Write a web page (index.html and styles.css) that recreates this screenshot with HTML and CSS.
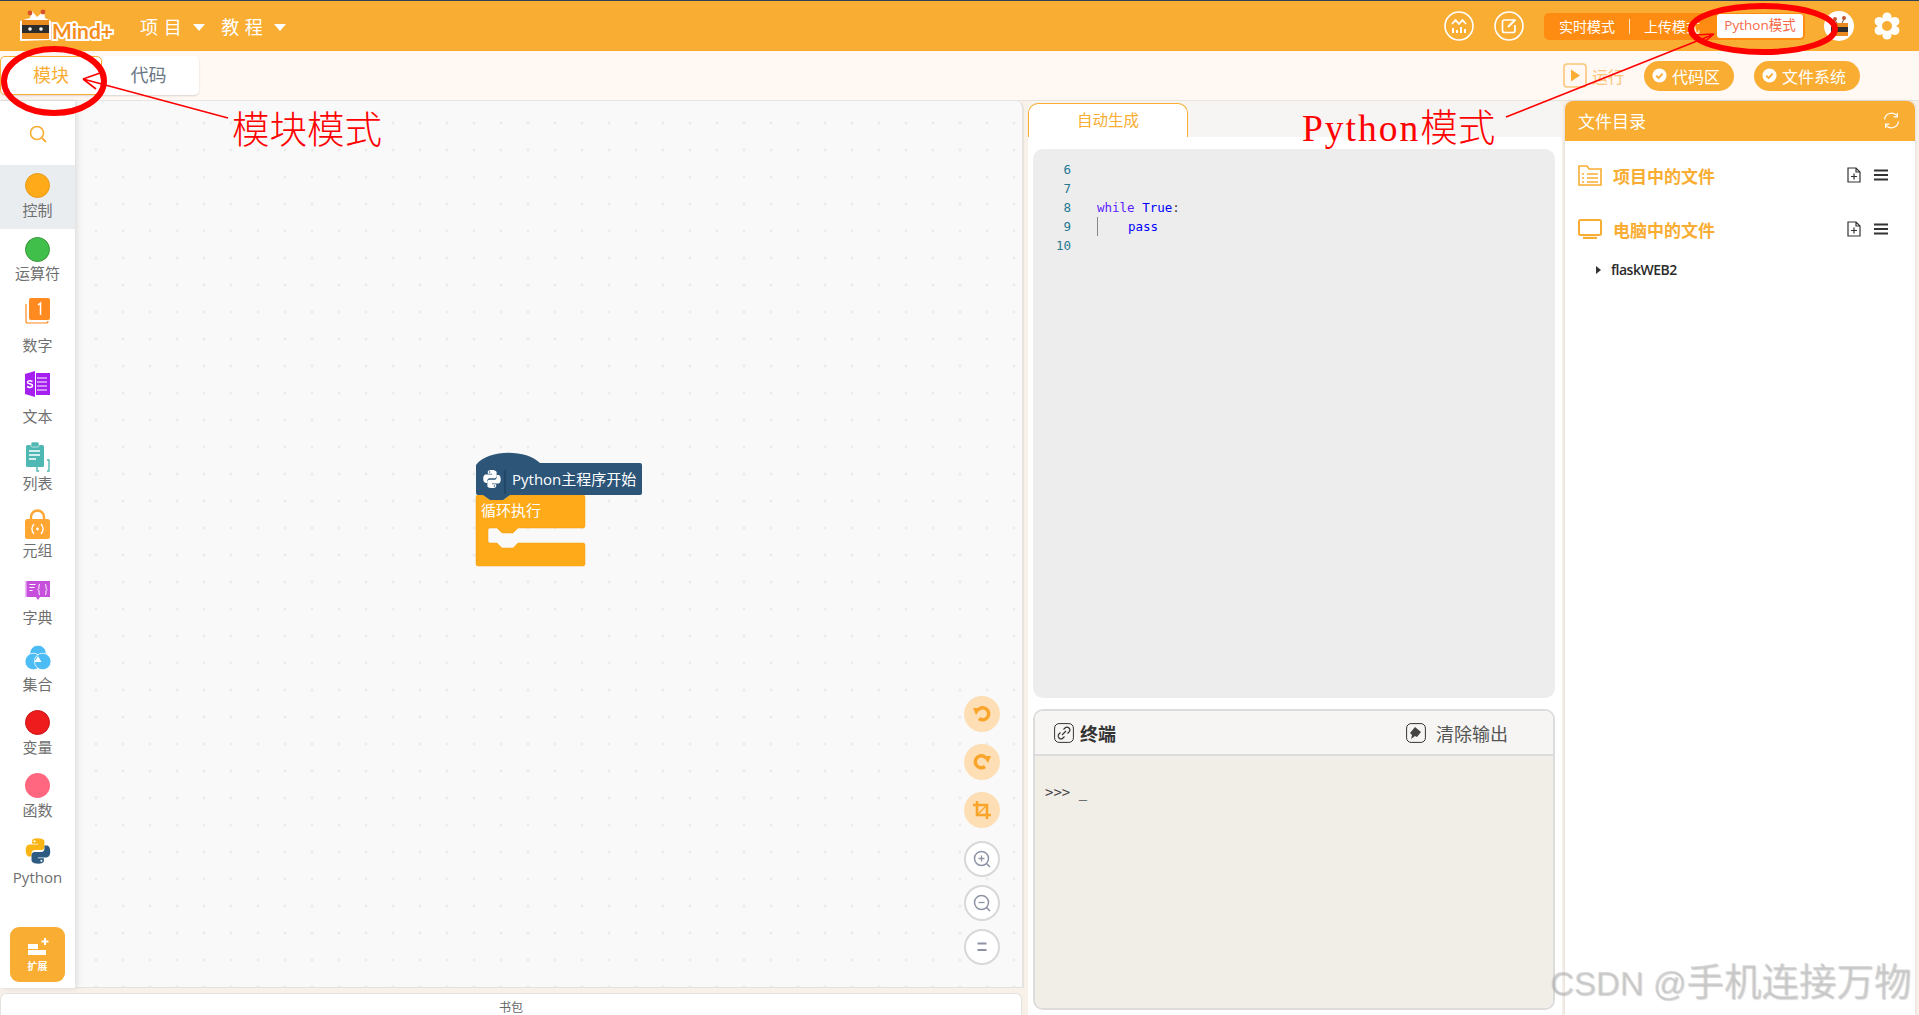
FILE: index.html
```html
<!DOCTYPE html>
<html lang="zh-CN">
  <head>
    <meta charset="UTF-8" />
    <meta name="viewport" content="width=device-width, initial-scale=1.0" />
    <title>Mind+</title>
    <link rel="stylesheet" href="styles.css">
  </head>
  <body>
    <svg class="sprite" width="0" height="0">
      <symbol id="py-half" viewBox="0 0 32 32">
        <path fill-rule="evenodd" d="M15.9 1.5c-7 0-6.6 3-6.6 3v3.2h6.8v1H6.7S2 8.1 2 15.3s4.1 7 4.1 7h2.5v-3.4s-.1-4.1 4-4.1h6.9s3.9.1 3.9-3.8V5.4s.6-3.9-8.5-3.9zM12.1 3.7a1.2 1.2 0 1 1 0 2.4 1.2 1.2 0 0 1 0-2.4z"/>
      </symbol>
      <symbol id="check" viewBox="0 0 16 16">
        <circle cx="8" cy="8" r="7.5" fill="#fff"/>
        <path d="M4.5 8.2l2.5 2.5 4.3-4.8" fill="none" stroke="#f9ad33" stroke-width="2"/>
      </symbol>
      <symbol id="new-file" viewBox="0 0 14 16">
        <path d="M1 1h8l4 4v10H1z M9 1v4h4" fill="none" stroke="#333" stroke-width="1.2"/>
        <path d="M7 6.5v6M4 9.5h6" stroke="#333" stroke-width="1.2"/>
      </symbol>
      <symbol id="menu-lines" viewBox="0 0 14 12">
        <path d="M0 1.5h14M0 6h14M0 10.5h14" stroke="#333" stroke-width="1.8"/>
      </symbol>
    </svg>

    <header class="topbar">
      <svg class="logo" width="102" height="34" viewBox="0 0 102 34">
        <path d="M4 13L14 10 16 3 21 9 28 3 29 10 35 13V32L4 33z" fill="#fff"/>
        <rect x="6" y="12" width="27" height="19" fill="#e98a1f"/>
        <rect x="6" y="17" width="27" height="8" fill="#2c2c2c"/>
        <circle cx="14" cy="21" r="1.800" fill="#fff"/>
        <circle cx="25" cy="21" r="1.800" fill="#fff"/>
        <circle cx="14" cy="5" r="2.400" fill="#d9522b"/>
        <circle cx="27" cy="4" r="2.400" fill="#d9522b"/>
        <text class="logo-text" x="36" y="31">Mind+</text>
      </svg>
      <nav class="menu">
        <span class="menu-item">项 目<i class="caret"></i></span>
        <span class="menu-item">教 程<i class="caret"></i></span>
      </nav>
      <div class="top-right">
        <svg class="round-icon" width="30" height="30" viewBox="0 0 30 30">
          <circle cx="15" cy="15" r="14" fill="none" stroke="#fff" stroke-width="1.6"/>
          <path d="M8 13l3.5-4 3.5 4 3.5-4 3.5 4" fill="none" stroke="#fff" stroke-width="1.8"/>
          <path d="M9 22v-5M13 22v-3M17 22v-6M21 22v-4" stroke="#fff" stroke-width="2"/>
        </svg>
        <svg class="round-icon" width="30" height="30" viewBox="0 0 30 30">
          <circle cx="15" cy="15" r="14" fill="none" stroke="#fff" stroke-width="1.6"/>
          <path d="M20 9H10.5a2 2 0 0 0-2 2v8.500a2 2 0 0 0 2 2H19a2 2 0 0 0 2-2V14" fill="none" stroke="#fff" stroke-width="1.7"/>
          <path d="M14 16l7.500-7.500" stroke="#fff" stroke-width="2"/>
        </svg>
        <div class="mode-switch">
          <span class="mode">实时模式</span>
          <i class="mode-sep"></i>
          <span class="mode">上传模式</span>
          <span class="mode mode-active">Python模式</span>
        </div>
        <div class="avatar">
          <svg width="24" height="24" viewBox="0 0 24 24">
            <rect x="4" y="9" width="17" height="13" fill="#e98a1f"/>
            <rect x="4" y="13" width="17" height="5" fill="#2c2c2c"/>
            <circle cx="8" cy="5" r="2" fill="#c9552f"/>
            <circle cx="17" cy="4" r="2" fill="#c9552f"/>
            <path d="M8 6l2 3M17 5l-2 4" stroke="#7a5a3a"/>
          </svg>
        </div>
        <svg class="gear" width="28" height="28" viewBox="0 0 28 28">
          <g fill="#fff">
            <circle cx="14" cy="5" r="4.600"/><circle cx="14" cy="23" r="4.600"/>
            <circle cx="6.200" cy="9.500" r="4.600"/><circle cx="21.800" cy="9.500" r="4.600"/>
            <circle cx="6.200" cy="18.500" r="4.600"/><circle cx="21.800" cy="18.500" r="4.600"/>
            <circle cx="14" cy="14" r="9"/>
          </g>
          <circle cx="14" cy="14" r="5" fill="#f9ad33"/>
        </svg>
      </div>
    </header>

    <div class="subbar">
      <div class="tabs">
        <span class="tab tab-active">模块</span>
        <span class="tab">代码</span>
      </div>
      <div class="actions">
        <span class="run">
          <svg width="24" height="25" viewBox="0 0 24 25">
            <rect x="1" y="1" width="22" height="23" rx="3" fill="none" stroke="#fbc67a" stroke-width="1.600"/>
            <path d="M8 6.500l9 6-9 6z" fill="#f9ad33"/>
          </svg>
          运行
        </span>
        <span class="pill pill-code"><svg width="15" height="15"><use href="#check"/></svg>代码区</span>
        <span class="pill pill-files"><svg width="15" height="15"><use href="#check"/></svg>文件系统</span>
      </div>
    </div>

    <main class="main">
      <div class="left-col">
        <div class="workspace">
          <aside class="sidebar">
            <div class="search">
              <svg width="20" height="20" viewBox="0 0 20 20">
                <circle cx="9" cy="9" r="6.500" fill="none" stroke="#f9ad33" stroke-width="1.600"/>
                <path d="M14 14l4 4" stroke="#f9ad33" stroke-width="1.800"/>
              </svg>
            </div>
            <div class="cat cat-control">
              <span class="cat-icon"><i class="dot dot-orange"></i></span>
              <span class="cat-label">控制</span>
            </div>
            <div class="cat cat-op">
              <span class="cat-icon"><i class="dot dot-green"></i></span>
              <span class="cat-label">运算符</span>
            </div>
            <div class="cat cat-num">
              <span class="cat-icon">
                <svg width="25" height="26" viewBox="0 0 25 26">
                  <path d="M1 6v17a2 2 0 0 0 2 2h18a2 2 0 0 0 2-2" fill="none" stroke="#ff8a1f" stroke-width="1.200"/>
                  <rect x="4" y="0" width="21" height="22" rx="2" fill="#ff8a1f"/>
                  <path d="M13 7l2.500-2V17" fill="none" stroke="#fff" stroke-width="1.500"/>
                </svg>
              </span>
              <span class="cat-label">数字</span>
            </div>
            <div class="cat cat-text">
              <span class="cat-icon">
                <svg width="25" height="26" viewBox="0 0 25 26">
                  <path d="M10 0L0 3v20l10 3z" fill="#a51ff0"/>
                  <rect x="11" y="2" width="14" height="22" fill="#a51ff0"/>
                  <path d="M12 7h10M12 11h10M12 15h10M12 19h10" stroke="#fff" stroke-width="1.200"/>
                  <path d="M7.500 10.500c-3-1.500-5-.5-5 1s5 1 5 3-3 2.500-5.500 1" fill="none" stroke="#fff" stroke-width="1.500"/>
                </svg>
              </span>
              <span class="cat-label">文本</span>
            </div>
            <div class="cat cat-list">
              <span class="cat-icon">
                <svg width="25" height="30" viewBox="0 0 25 30">
                  <rect x="1" y="3" width="18" height="22" rx="1.500" fill="#4fb8b2"/>
                  <rect x="6" y="0" width="8" height="5" rx="1.500" fill="#4fb8b2" stroke="#fff" stroke-width=".6"/>
                  <path d="M4 9h11M4 13h11M4 17h7" stroke="#fff" stroke-width="1.400"/>
                  <path d="M14 18h-2v11h2M22 18h2v11h-2" fill="none" stroke="#4fb8b2" stroke-width="1.400"/>
                </svg>
              </span>
              <span class="cat-label">列表</span>
            </div>
            <div class="cat cat-tuple">
              <span class="cat-icon">
                <svg width="25" height="30" viewBox="0 0 25 30">
                  <path d="M6 11V8a6.500 6.500 0 0 1 13 0v3" fill="none" stroke="#ffa633" stroke-width="2.400"/>
                  <rect x="0" y="10" width="25" height="20" rx="2.500" fill="#ffa633"/>
                  <path d="M9 15c-2.500 3-2.500 7 0 10M16 15c2.500 3 2.500 7 0 10" fill="none" stroke="#fff" stroke-width="1.300"/>
                  <circle cx="12.500" cy="20" r="1.400" fill="#fff"/>
                </svg>
              </span>
              <span class="cat-label">元组</span>
            </div>
            <div class="cat cat-dict">
              <span class="cat-icon">
                <svg width="26" height="20" viewBox="0 0 26 20">
                  <path d="M1 1h24v16H15l-2 3-2-3H1z" fill="#c64fdc"/>
                  <path d="M1 1v16" stroke="#e9a6f3" stroke-width="1.500"/>
                  <path d="M4.500 4.500h6M4.500 7.500h5M4.500 10.500h3" stroke="#fff" stroke-width="1"/>
                  <path d="M15 4c-2 0 0 5-2 5.500 2 .5 0 5.500 2 5.500M20 4c2 0 0 5 2 5.500-2 .5 0 5.500-2 5.500" fill="none" stroke="#fff" stroke-width="1"/>
                </svg>
              </span>
              <span class="cat-label">字典</span>
            </div>
            <div class="cat cat-set">
              <span class="cat-icon">
                <svg width="26" height="26" viewBox="0 0 26 26">
                  <g fill="#4cbcf5" stroke="#fff" stroke-width=".8">
                    <circle cx="13" cy="8.500" r="8.300"/>
                    <circle cx="8.300" cy="16.500" r="8.300"/>
                    <circle cx="17.700" cy="16.500" r="8.300"/>
                  </g>
                  <path d="M13 11l3.500 6h-7z" fill="#fff"/>
                </svg>
              </span>
              <span class="cat-label">集合</span>
            </div>
            <div class="cat cat-var">
              <span class="cat-icon"><i class="dot dot-red"></i></span>
              <span class="cat-label">变量</span>
            </div>
            <div class="cat cat-func">
              <span class="cat-icon"><i class="dot dot-pink"></i></span>
              <span class="cat-label">函数</span>
            </div>
            <div class="cat cat-py">
              <span class="cat-icon">
                <svg width="28" height="28" viewBox="0 0 32 32">
                  <use href="#py-half" class="py-yellow"/>
                  <use href="#py-half" class="py-blue" transform="rotate(180 16 16)"/>
                </svg>
              </span>
              <span class="cat-label">Python</span>
            </div>
            <div class="extend">
              <svg width="22" height="19" viewBox="0 0 22 19">
                <path d="M1 7h10v5H1zM1 13h18v5H1z" fill="#fff"/>
                <path d="M18 1v7M14.500 4.500h7" stroke="#fff" stroke-width="2"/>
              </svg>
              <span>扩展</span>
            </div>
          </aside>

          <section class="canvas">
            <svg class="blocks" width="180" height="125" viewBox="0 0 180 125">
              <path d="M8 50H13L20 55H33L40 50H113a2 2 0 0 1 2 2V81a2 2 0 0 1-2 2H48L43 88H32L27 83H20a2 2 0 0 0-2 2V96a2 2 0 0 0 2 2H27L32 103H43L48 98H113a2 2 0 0 1 2 2V119a2 2 0 0 1-2 2H8a2 2 0 0 1-2-2V52a2 2 0 0 1 2-2Z" fill="#ffab19" stroke="#f09f12" stroke-width=".5"/>
              <path d="M6 20C18 4 56 4 70 18H170a2 2 0 0 1 2 2V48a2 2 0 0 1-2 2H40L33 55H20L13 50H8a2 2 0 0 1-2-2Z" fill="#2c5578"/>
              <path d="M35 25V49" stroke="#1b3a55"/>
              <svg x="12" y="24" width="20" height="20" viewBox="0 0 32 32">
                <use href="#py-half" class="py-white"/>
                <use href="#py-half" class="py-white" transform="rotate(180 16 16)"/>
              </svg>
              <text class="block-text" x="42" y="39.500">Python主程序开始</text>
              <text class="block-text" x="11" y="71">循环执行</text>
            </svg>

            <div class="zoom-tools">
              <span class="tool tool-orange">
                <svg width="20" height="20" viewBox="0 0 20 20">
                  <path d="M6 6a6 6 0 1 1 1 8.500" fill="none" stroke="#f9a52b" stroke-width="3.500"/>
                  <path d="M1 4l8 0-5 7z" fill="#f9a52b"/>
                </svg>
              </span>
              <span class="tool tool-orange">
                <svg width="20" height="20" viewBox="0 0 20 20">
                  <path d="M14 6a6 6 0 1 0-1 8.500" fill="none" stroke="#f9a52b" stroke-width="3.500"/>
                  <path d="M19 4l-8 0 5 7z" fill="#f9a52b"/>
                </svg>
              </span>
              <span class="tool tool-orange">
                <svg width="20" height="20" viewBox="0 0 20 20">
                  <path d="M5 1v14h14M1 5h14v14" fill="none" stroke="#f9a52b" stroke-width="2.600"/>
                  <path d="M6 14l8-8" stroke="#f9a52b" stroke-width="1.500"/>
                </svg>
              </span>
              <span class="tool tool-plain">
                <svg width="20" height="20" viewBox="0 0 20 20">
                  <circle cx="9.500" cy="9.500" r="7" fill="none" stroke="#8d93a5" stroke-width="1.500"/>
                  <path d="M14.500 14.500l3.500 3.500" stroke="#8d93a5" stroke-width="1.500"/>
                  <path d="M6.500 9.500h6M9.500 6.500v6" stroke="#8d93a5" stroke-width="1.300"/>
                </svg>
              </span>
              <span class="tool tool-plain">
                <svg width="20" height="20" viewBox="0 0 20 20">
                  <circle cx="9.500" cy="9.500" r="7" fill="none" stroke="#8d93a5" stroke-width="1.500"/>
                  <path d="M14.500 14.500l3.500 3.500" stroke="#8d93a5" stroke-width="1.500"/>
                  <path d="M6.500 9.500h6" stroke="#8d93a5" stroke-width="1.300"/>
                </svg>
              </span>
              <span class="tool tool-plain">
                <svg width="20" height="20" viewBox="0 0 20 20">
                  <path d="M5.500 6.500h9M5.500 13h9" stroke="#8d93a5" stroke-width="2"/>
                </svg>
              </span>
            </div>
          </section>
        </div>
        <div class="backpack">书包</div>
      </div>

      <div class="mid-col">
        <div class="code-tabs">
          <span class="code-tab">自动生成</span>
        </div>
        <div class="editor">
          <div class="line"><span class="ln">6</span></div>
          <div class="line"><span class="ln">7</span></div>
          <div class="line"><span class="ln">8</span><code><b class="kw">while</b> <b class="kw2">True</b>:</code></div>
          <div class="line"><span class="ln">9</span><code><i class="indent"></i><b class="kw2">pass</b></code></div>
          <div class="line"><span class="ln">10</span></div>
        </div>
        <div class="terminal">
          <div class="term-head">
            <span class="term-title">
              <svg width="20" height="20" viewBox="0 0 20 20">
                <rect x=".6" y=".6" width="18.800" height="18.800" rx="4.500" fill="none" stroke="#333" stroke-width="1"/>
                <path d="M8 12l4-4M6.500 9.500L5 11a2.800 2.800 0 0 0 4 4l1.500-1.500M9.500 6.500L11 5a2.800 2.800 0 0 1 4 4l-1.500 1.500" fill="none" stroke="#333" stroke-width="1.100"/>
              </svg>
              终端
            </span>
            <span class="term-clear">
              <svg width="20" height="20" viewBox="0 0 20 20">
                <rect x=".6" y=".6" width="18.800" height="18.800" rx="4.500" fill="none" stroke="#333" stroke-width="1"/>
                <path d="M9 4l6 5-4 5-2-1-4 3 1-4-2-2z" fill="#444"/>
              </svg>
              清除输出
            </span>
          </div>
          <div class="term-body">&gt;&gt;&gt; <span class="cursor">_</span></div>
        </div>
      </div>

      <div class="right-col">
        <div class="files-head">
          <span>文件目录</span>
          <svg width="17" height="17" viewBox="0 0 16 16">
            <path d="M1.500 7A6.500 6.500 0 0 1 13 3.500M14.500 9A6.500 6.500 0 0 1 3 12.500" fill="none" stroke="#fff" stroke-width="1.200"/>
            <path d="M13.500 1v3.500H10M2.500 15v-3.500H6" fill="none" stroke="#fff" stroke-width="1.200"/>
          </svg>
        </div>
        <div class="file-group file-group-first">
          <svg width="24" height="21" viewBox="0 0 24 21">
            <path d="M1 20V1h8l2 3h12v16z" fill="none" stroke="#f9ad33" stroke-width="1.600"/>
            <path d="M4 9h2M9 9h11M4 13h2M9 13h11M4 17h2M9 17h11" stroke="#f9ad33" stroke-width="1.300"/>
          </svg>
          <span class="file-title">项目中的文件</span>
          <svg class="file-act" width="14" height="16"><use href="#new-file"/></svg>
          <svg class="file-act" width="14" height="12"><use href="#menu-lines"/></svg>
        </div>
        <div class="file-group">
          <svg width="24" height="20" viewBox="0 0 24 20">
            <rect x="1" y="1" width="22" height="15" rx="1.500" fill="none" stroke="#f9ad33" stroke-width="2"/>
            <path d="M5 19h14" stroke="#f9ad33" stroke-width="2.400"/>
          </svg>
          <span class="file-title">电脑中的文件</span>
          <svg class="file-act" width="14" height="16"><use href="#new-file"/></svg>
          <svg class="file-act" width="14" height="12"><use href="#menu-lines"/></svg>
        </div>
        <div class="tree-row"><i class="tree-caret"></i>flaskWEB2</div>
      </div>
    </main>

    <!-- red marks drawn over the screenshot -->
    <svg class="marks" width="1919" height="1015" viewBox="0 0 1919 1015">
      <g fill="none" stroke="#f00">
        <ellipse cx="54" cy="81" rx="50" ry="32" stroke-width="6"/>
        <path d="M228 118L83 79M83 79L103 72M83 79L96 89" stroke-width="1.600"/>
        <ellipse cx="1763" cy="29" rx="72" ry="23" stroke-width="6"/>
        <path d="M1506 117L1712 35M1714 34L1695 35M1714 34L1703 43" stroke-width="1.600"/>
      </g>
    </svg>
    <span class="note note-blocks">模块模式</span>
    <span class="note note-python"><b>Python</b>模式</span>
    <span class="watermark">CSDN @<b>手机连接万物</b></span>
  </body>
</html>
```

FILE: styles.css
```css
* {
  box-sizing: border-box;
}
body {
  margin: 0;
  width: 1919px;
  height: 1015px;
  overflow: hidden;
  position: relative;
  display: flex;
  flex-direction: column;
  background-color: #f7f1ea;
  font-family: "Open Sans", "Noto Sans CJK SC", sans-serif;
  color: #333;
}
i {
  font-style: normal;
}
.sprite {
  position: absolute;
}
.py-yellow {
  fill: #fbb616;
}
.py-blue {
  fill: #2d5b82;
}
.py-white {
  fill: #fff;
}

/* top bar */
.topbar {
  height: 51px;
  flex: none;
  display: flex;
  align-items: center;
  padding-left: 16px;
  background-color: #f9ad33;
  border-top: 1px solid #2f4258;
  color: #fff;
}
.logo {
  flex: none;
  margin-top: -2px;
}
.logo-text {
  font-family: "Lato", sans-serif;
  font-size: 21px;
  font-weight: 700;
  fill: #f58e1e;
  stroke: #fff;
  stroke-width: 4px;
  paint-order: stroke;
}
.menu {
  display: flex;
  margin-left: 22px;
  gap: 16px;
}
.menu-item {
  display: flex;
  align-items: center;
  font-size: 18px;
  letter-spacing: 0.5px;
}
.caret {
  width: 0;
  height: 0;
  margin-left: 11px;
  margin-top: 3px;
  border-left: 6px solid transparent;
  border-right: 6px solid transparent;
  border-top: 7px solid #fff;
}
.top-right {
  margin-left: auto;
  display: flex;
  align-items: center;
  padding-right: 18px;
}
.round-icon {
  margin-right: 20px;
}
.mode-switch {
  width: 261px;
  height: 27px;
  margin-right: 19px;
  display: flex;
  align-items: center;
  padding-left: 15px;
  padding-right: 2px;
  border-radius: 5px;
  background-color: #ff8c12;
  font-size: 14px;
}
.mode-sep {
  width: 1px;
  height: 15px;
  margin: 0 14px;
  background-color: #ffe3c2;
}
.mode-active {
  margin-left: auto;
  width: 86px;
  height: 24px;
  line-height: 23px;
  text-align: center;
  border-radius: 3px;
  background-color: #fff;
  color: #f7694a;
  white-space: nowrap;
  font-size: 13.500px;
}
.avatar {
  width: 30px;
  height: 30px;
  margin-right: 19px;
  display: flex;
  align-items: center;
  justify-content: center;
  border-radius: 50%;
  background-color: #fff;
}

/* second bar */
.subbar {
  height: 50px;
  flex: none;
  display: flex;
  justify-content: space-between;
  background-color: #fff8f3;
  border-bottom: 1px solid #e8e4df;
}
.tabs {
  display: flex;
  height: 39px;
  margin-top: 5px;
  border-radius: 5px;
  background-color: #fff;
  box-shadow: 0 1px 2px rgba(0, 0, 0, 0.15);
}
.tab {
  width: 97px;
  padding-right: 4px;
  text-align: center;
  font-size: 18px;
  line-height: 38px;
  color: #6b7785;
}
.tab-active {
  width: 102px;
  padding-right: 0;
  border: 1px solid #f9ad33;
  border-radius: 5px;
  line-height: 37px;
  color: #f9ad33;
}
.actions {
  display: flex;
  align-items: center;
  padding-right: 59px;
}
.run {
  display: flex;
  align-items: center;
  gap: 5px;
  margin-right: 20px;
  font-size: 16px;
  color: #fbc67a;
}
.pill {
  height: 30px;
  display: flex;
  align-items: center;
  gap: 5px;
  border-radius: 15px;
  padding-left: 8px;
  background-color: #f9ad33;
  color: #fff;
  font-size: 16px;
}
.pill-code {
  width: 90px;
  margin-right: 20px;
}
.pill-files {
  width: 106px;
}

/* main area */
.main {
  flex: 1;
  min-height: 0;
  display: flex;
}
.left-col {
  width: 1024px;
  flex: none;
  display: flex;
  flex-direction: column;
}
.workspace {
  height: 887px;
  flex: none;
  display: flex;
}
.sidebar {
  width: 75px;
  flex: none;
  display: flex;
  flex-direction: column;
  background-color: #fff;
  box-shadow: 2px 0 6px rgba(0, 0, 0, 0.12);
  position: relative;
  z-index: 1;
}
.search {
  height: 64px;
  flex: none;
  display: flex;
  align-items: center;
  justify-content: center;
  padding-top: 2px;
}
.cat {
  flex: none;
  display: flex;
  flex-direction: column;
  align-items: center;
  padding-top: 7px;
}
.cat-icon {
  display: flex;
  justify-content: center;
  align-items: flex-start;
  margin-bottom: 4px;
}
.cat-label {
  height: 18px;
  line-height: 18px;
  font-size: 15px;
  color: #6f6f6f;
}
.cat-control {
  height: 64px;
  padding-top: 8px;
  background-color: #e9edf0;
}
.cat-control .cat-icon {
  margin-bottom: 3px;
}
.cat-op {
  height: 62px;
  padding-top: 8px;
}
.cat-op .cat-icon {
  margin-bottom: 2px;
}
.cat-num {
  height: 73px;
}
.cat-num .cat-icon {
  height: 34px;
}
.cat-text {
  height: 71px;
}
.cat-text .cat-icon {
  height: 32px;
}
.cat-list {
  height: 67px;
}
.cat-list .cat-icon {
  height: 28px;
}
.cat-tuple {
  height: 71px;
}
.cat-tuple .cat-icon {
  height: 28px;
}
.cat-dict {
  height: 65px;
}
.cat-dict .cat-icon {
  height: 24px;
}
.cat-set {
  height: 65px;
}
.cat-var {
  height: 63px;
}
.cat-var .cat-icon {
  margin-bottom: 3px;
}
.cat-func {
  height: 64px;
}
.cat-func .cat-icon {
  margin-bottom: 3px;
}
.cat-py .cat-icon {
  margin-bottom: 3px;
}
.dot {
  display: block;
  width: 25px;
  height: 25px;
  border-radius: 50%;
}
.dot-orange {
  background-color: #ffab19;
  border: 1px solid #e89a14;
}
.dot-green {
  background-color: #40bf4a;
  border: 1px solid #389438;
}
.dot-red {
  background-color: #ee1c1c;
  border: 1px solid #c91414;
}
.dot-pink {
  background-color: #ff6680;
}
.extend {
  width: 55px;
  height: 55px;
  margin: auto 0 6px 10px;
  flex: none;
  display: flex;
  flex-direction: column;
  align-items: center;
  justify-content: center;
  gap: 2px;
  border-radius: 9px;
  background-color: #f9ad33;
  color: #fff;
  font-size: 10px;
  font-weight: 700;
}
.canvas {
  flex: 1;
  position: relative;
  background-color: #f9f9f9;
  background-image: radial-gradient(circle, #e6e6e6 1px, transparent 1.200px);
  background-size: 27px 27px;
  background-position: 7.500px 8.500px;
  border-right: 2px solid #e6e2dd;
  border-bottom: 1px solid #e6e2dd;
  border-top-right-radius: 8px;
}
.blocks {
  position: absolute;
  left: 395px;
  top: 344px;
}
.block-text {
  font-family: "Open Sans", "Noto Sans CJK SC", sans-serif;
  font-size: 15px;
  fill: #fff;
}
.zoom-tools {
  position: absolute;
  left: 889px;
  top: 595px;
  display: flex;
  flex-direction: column;
  gap: 8px;
}
.tool {
  width: 36px;
  height: 36px;
  display: flex;
  align-items: center;
  justify-content: center;
  border-radius: 50%;
}
.tool-orange {
  margin-bottom: 4px;
  background-color: #fedfb5;
}
.tool-orange:nth-child(3) {
  margin-bottom: 5px;
}
.tool-plain {
  background-color: #fff;
  border: 2px solid #d8d8d8;
}
.backpack {
  margin-top: 5px;
  width: 1022px;
  flex: 1;
  padding-top: 4px;
  text-align: center;
  font-size: 12px;
  color: #666;
  background-color: #fff;
  border: 1px solid #e6e2dd;
  border-bottom: 0;
  border-radius: 6px 6px 0 0;
}

/* generated code column */
.mid-col {
  width: 534px;
  margin-left: 4px;
  flex: none;
  display: flex;
  flex-direction: column;
  padding: 0 7px 5px 5px;
  background-color: #fff;
  border-radius: 8px 8px 0 0;
}
.code-tabs {
  height: 36px;
  flex: none;
  margin: 0 -7px 0 -5px;
  background-color: #f6f5f3;
  border-radius: 8px 8px 0 0;
  display: flex;
  align-items: flex-end;
}
.code-tab {
  width: 160px;
  height: 34px;
  line-height: 32px;
  text-align: center;
  font-size: 15.500px;
  color: #f9ad33;
  background-color: #fff;
  border: 1px solid #f9ad33;
  border-bottom: 0;
  border-radius: 10px 10px 0 0;
}
.editor {
  height: 549px;
  flex: none;
  margin-top: 12px;
  padding-top: 11px;
  background-color: #ededed;
  border-radius: 10px;
  font-family: "DejaVu Sans Mono", monospace;
  font-size: 12.500px;
}
.line {
  height: 19px;
  line-height: 19px;
  display: flex;
}
.ln {
  width: 38px;
  text-align: right;
  color: #237893;
}
.line code {
  margin-left: 26px;
  font-family: inherit;
  color: #333;
  white-space: pre;
}
.kw {
  font-weight: 400;
  color: #5a1dff;
}
.kw2 {
  font-weight: 400;
  color: #0000ff;
}
.indent {
  display: inline-block;
  vertical-align: top;
  width: 31px;
  height: 19px;
  border-left: 1px solid #888;
}
.terminal {
  margin-top: 11px;
  flex: 1;
  display: flex;
  flex-direction: column;
  border: 2px solid #dcdcdc;
  border-radius: 10px;
  overflow: hidden;
}
.term-head {
  height: 45px;
  flex: none;
  display: flex;
  align-items: center;
  justify-content: space-between;
  padding: 0 45px 0 19px;
  background-color: #f6f5f3;
  border-bottom: 2px solid #dcdcdc;
}
.term-title {
  display: flex;
  align-items: center;
  gap: 6px;
  font-size: 18px;
  font-weight: 700;
}
.term-clear {
  display: flex;
  align-items: center;
  gap: 10px;
  font-size: 18px;
  color: #555;
}
.term-body {
  flex: 1;
  padding: 26px 0 0 10px;
  font-size: 14px;
  line-height: 20px;
  background-color: #f1eee8;
  font-family: "DejaVu Sans Mono", monospace;
  color: #444;
}
.cursor {
  color: #000;
}

/* file panel */
.right-col {
  width: 350px;
  margin-left: 3px;
  flex: none;
  background-color: #fff;
  border-radius: 8px 8px 0 0;
  box-shadow: 0 0 3px rgba(0, 0, 0, 0.15);
}
.files-head {
  height: 40px;
  display: flex;
  align-items: center;
  justify-content: space-between;
  padding: 0 15px 1px 13px;
  background-color: #f9ad33;
  border-radius: 8px 8px 0 0;
  color: #fff;
  font-size: 17px;
}
.file-group {
  height: 54px;
  display: flex;
  align-items: center;
  padding: 0 27px 0 13px;
}
.file-group-first {
  margin-top: 7px;
}
.file-title {
  margin-left: 11px;
  margin-right: auto;
  font-size: 17px;
  font-weight: 700;
  color: #f9ad33;
}
.file-act {
  margin-left: 13px;
}
.tree-row {
  margin-top: 4px;
  padding-left: 31px;
  display: flex;
  align-items: center;
  font-size: 14px;
  font-weight: 600;
  letter-spacing: -0.5px;
  color: #2b2b2b;
}
.tree-caret {
  width: 0;
  height: 0;
  margin-right: 10px;
  border-top: 4px solid transparent;
  border-bottom: 4px solid transparent;
  border-left: 5px solid #333;
}

/* annotations on top of the screenshot */
.marks {
  position: absolute;
  left: 0;
  top: 0;
  z-index: 2;
  pointer-events: none;
}
.note {
  position: absolute;
  z-index: 2;
  color: #f00;
  font-family: "Liberation Serif", "Noto Sans CJK SC", serif;
  font-size: 37.500px;
  font-weight: 300;
  line-height: 40px;
  white-space: nowrap;
}
.note b {
  font-weight: 400;
  letter-spacing: 2px;
}
.note-blocks {
  left: 232px;
  top: 111px;
}
.note-python {
  left: 1302px;
  top: 109px;
}
.watermark {
  position: absolute;
  z-index: 2;
  left: 1550px;
  top: 960px;
  font-family: "Liberation Sans", "Noto Sans CJK SC", sans-serif;
  font-size: 33px;
  line-height: 44px;
  white-space: nowrap;
  color: rgba(185, 185, 185, 0.5);
  text-shadow: 1px 1px 1px rgba(120, 120, 120, 0.3);
}
.watermark b {
  font-weight: 400;
  font-size: 37.500px;
}
```
